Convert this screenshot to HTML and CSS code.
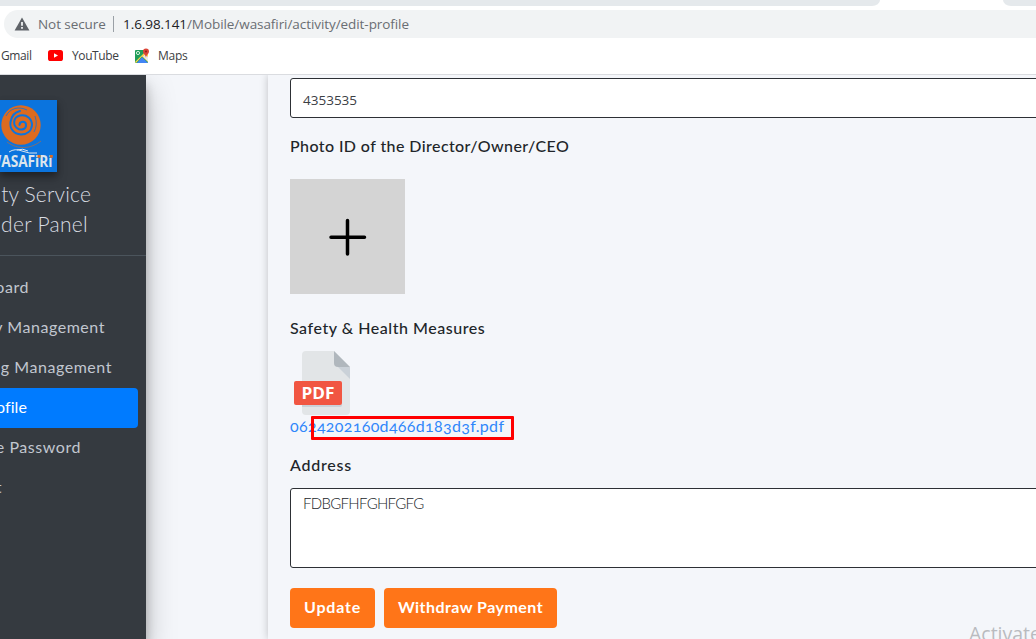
FILE: index.html
```html
<!DOCTYPE html>
<html lang="en">
<head>
<meta charset="utf-8">
<title>Edit Profile</title>
<link rel="stylesheet" href="styles.css">
</head>
<body>
<header class="browser">
  <div class="tabs"><span class="tab tab-left"></span><span class="tab tab-right"></span></div>
  <div class="address-bar">
    <svg class="warn" width="16" height="14" viewBox="0 0 16 14"><path d="M8 0.6 15.4 13.6H.6Z" fill="#5f6368"/><path d="M7.1 5h1.8v3.700H7.100zM7.100 10h1.800v1.700H7.100z" fill="#f1f3f4"/></svg>
    <span class="secure">Not secure</span>
    <span class="divider"></span>
    <span class="url"><b>1.6.98.141</b>/Mobile/wasafiri/activity/edit-profile</span>
  </div>
  <nav class="bookmarks">
    <span class="gmail">Gmail</span>
    <svg class="yt" width="15" height="11" viewBox="0 0 15 11"><rect width="15" height="11" rx="2.6" fill="#f00"/><path d="M6 3.3 10 5.5 6 7.7Z" fill="#fff"/></svg>
    <span class="youtube">YouTube</span>
    <svg class="map" width="16" height="16" viewBox="0 0 16 16"><rect x="1" y="2" width="13" height="13" rx="1" fill="#1f9d58"/><path d="M1 14 12 3l2 2v9L8 8.5 2 15Z" fill="#fbd24b"/><path d="M3 15 8 9l6 6Z" fill="#4285f4"/><path d="M9 8.5 11 6.5 14 9v4.5Z" fill="#e8eaed"/><circle cx="4" cy="5" r="1.6" fill="none" stroke="#d5efdf"/><path d="M12 .5a3 3 0 0 1 3 3c0 2.4-2.6 3-3 6.5-.4-3.500-3-4.100-3-6.500a3 3 0 0 1 3-3Z" fill="#db4437"/><circle cx="12" cy="3.500" r="1" fill="#8c1d16"/></svg>
    <span class="maps">Maps</span>
  </nav>
</header>
<div class="page">
  <aside class="sidebar">
    <div class="brand">
      <svg class="logo" width="57" height="72" viewBox="0 0 57 72">
        <rect width="57" height="72" fill="#0b74de"/>
        <circle cx="21" cy="25" r="19.700" fill="#dc6b20"/>
        <path d="M19.500 25C19.500 21 25.500 20.500 26 24.500C26.500 29 22 30.500 18.500 29C12 26 13 17 20 15.500C27 14 32 19 32 25C31.500 31 27 34.500 21 34.500C14 34 9.500 29 10.500 22C11.500 16 15 12 20 11" fill="none" stroke="#0b74de" stroke-width="2" stroke-linecap="round"/>
        <path d="M6 16C10 8 19 6 27 10M35 16Q38 25 34 32" fill="none" stroke="#0b74de" stroke-width=".8"/>
        <path d="M7 42C18 50 31 49 41 41" fill="none" stroke="#9a6c55" stroke-width=".8"/>
        <path d="M9 52Q15 48 22 51T37 53M17 50Q23 48 28 51" fill="none" stroke="#dce5ed" stroke-width="1"/>
        <text class="logo-text" x="-12" y="66.500" textLength="64.500" lengthAdjust="spacingAndGlyphs">WASAFiRi</text>
        <path d="M37.500 55h3v2.800h-3zM49.800 55h3v2.800h-3z" fill="#dc6b20"/>
      </svg>
      <div class="title t1">ty Service</div>
      <div class="title t2">der Panel</div>
    </div>
    <nav class="menu">
      <a class="item m1">oard</a>
      <a class="item m2">y Management</a>
      <a class="item m3">g Management</a>
      <a class="item active m4">ofile</a>
      <a class="item m5">e Password</a>
      <a class="item m6">t</a>
    </nav>
  </aside>
  <main class="content">
    <div class="input number">4353535</div>
    <div class="label l1">Photo ID of the Director/Owner/CEO</div>
    <div class="upload"><svg width="115" height="115" viewBox="0 0 115 115"><path d="M57.500 41.500V75M41 58.300H74.500" stroke="#000" stroke-width="3.500" stroke-linecap="round"/></svg></div>
    <div class="label l2">Safety &amp; Health Measures</div>
    <svg class="pdf" width="64" height="64" viewBox="0 0 64 64">
      <path d="M16 0H44L60 16V60a4 4 0 0 1-4 4H16a4 4 0 0 1-4-4V4a4 4 0 0 1 4-4Z" fill="#e2e5e7"/>
      <path d="M48 16H60V28Z" fill="#cad1d8"/><path d="M44 0 60 16H48a4 4 0 0 1-4-4Z" fill="#b0b7bd"/>
      <path d="M12 54H50a2 2 0 0 0 2-2v2a2 2 0 0 1-2 2H12Z" fill="#cad1d8"/>
      <rect x="4" y="30" width="48" height="24" rx="2" fill="#f15642"/>
      <text class="pdf-text" x="11.500" y="48" textLength="33" lengthAdjust="spacingAndGlyphs">PDF</text>
    </svg>
    <div class="file"><a>0624202160d466d183d3f.pdf</a><span class="mark"></span></div>
    <div class="label l3">Address</div>
    <div class="input area">FDBGFHFGHFGFG</div>
    <div class="buttons"><button class="update">Update</button><button class="withdraw">Withdraw Payment</button></div>
  </main>
</div>
<div class="watermark">Activate</div>
</body>
</html>
```
FILE: styles.css
```css
* { box-sizing: border-box; }
body { margin: 0; width: 1036px; height: 639px; overflow: hidden; position: relative; background: #f4f6fa; font-family: Lato, sans-serif; color: #212529; }
svg { display: block; flex: none; }
.browser { height: 75px; background: #fff; border-bottom: 1px solid #dadce0; font-family: "Open Sans", "Noto Sans", sans-serif; }
.tabs { height: 10px; display: flex; justify-content: space-between; }
.tab { height: 6px; background: #e5e9ec; }
.tab-left { width: 880px; border-bottom-right-radius: 8px 6px; }
.tab-right { width: 33px; border-bottom-left-radius: 8px 6px; }
.address-bar { height: 28px; margin-left: 4px; padding-left: 10px; display: flex; align-items: center; background: #f1f3f4; border-radius: 14px 0 0 14px; font-size: 13.5px; letter-spacing: -.07px; white-space: nowrap; color: #6a6e73; }
.secure { margin-left: 8px; width: 67px; }
.divider { width: 1px; height: 16px; margin: 0 9px 0 8px; background: #9aa0a6; }
.url b { font-weight: 400; color: #202124; }
.bookmarks { height: 35px; display: flex; align-items: center; font-size: 12px; letter-spacing: -.4px; color: #3c4043; white-space: nowrap; }
.gmail { width: 48px; padding-left: 1px; }
.youtube { margin-left: 9px; width: 62px; }
.maps { margin-left: 8px; letter-spacing: -.25px; }
.page { height: 564px; display: flex; overflow: hidden; background: #f4f6fa; }
.sidebar { width: 146px; background: #353a40; box-shadow: 0 14px 28px rgba(0,0,0,.25), 0 10px 10px rgba(0,0,0,.22); overflow: hidden; z-index: 1; }
.brand { height: 181px; padding-top: 25px; border-bottom: 1px solid #4b545c; }
.logo { box-shadow: 0 6px 10px rgba(0,0,0,.25), 0 3px 6px rgba(0,0,0,.25); margin-bottom: 7px; }
.logo-text { font: 700 15.5px "Open Sans", sans-serif; fill: #dce5ed; }
.title { height: 30px; line-height: 30px; font-size: 21px; font-weight: 300; letter-spacing: .15px; color: #d9dde3; display: flex; justify-content: flex-end; white-space: nowrap; }
.t1 { width: 91px; }
.t2 { width: 88px; letter-spacing: .3px; }
.menu { padding-top: 12px; }
.item { height: 40px; padding-bottom: 4px; display: flex; align-items: center; justify-content: flex-end; font-size: 16px; letter-spacing: .55px; color: #c2c7d0; white-space: nowrap; }
.m1 { width: 29px; }
.m2 { width: 105px; }
.m3 { width: 112px; }
.m4 { width: 138px; padding-right: 111px; letter-spacing: .1px; }
.m5 { width: 81px; }
.m6 { width: 2px; }
.active { background: #007bff; color: #fff; border-radius: 0 4px 4px 0; }
.content { margin-left: 122px; width: 768px; padding: 3px 0 0 22px; box-shadow: 0 0 8px rgba(0,0,0,.22); background: #f4f6fa; }
.input { width: 760px; background: #fff; border: 1px solid #2d3035; border-radius: 3px; padding-left: 12px; }
.number { height: 40px; line-height: 42px; font-family: "Open Sans", sans-serif; font-size: 13.5px; color: #3c4045; }
.label { height: 24px; line-height: 24px; font-size: 16px; font-weight: 500; letter-spacing: .41px; white-space: nowrap; }
.l1 { margin-top: 16px; }
.upload { margin-top: 21px; width: 115px; height: 115px; background: #d4d4d4; }
.l2 { margin-top: 22px; letter-spacing: .53px; }
.pdf { margin-top: 11px; }
.pdf-text { font: 700 15.5px "Open Sans", sans-serif; fill: #fff; }
.file { position: relative; width: 224px; height: 24px; line-height: 22px; font-size: 16px; letter-spacing: .32px; color: #2f86fb; font-variant-numeric: oldstyle-nums; }
.mark { position: absolute; left: 21px; top: 1px; width: 203px; height: 24px; border: 3px solid #f00; border-radius: 1px; }
.l3 { margin-top: 14px; letter-spacing: .75px; }
.area { margin-top: 11px; height: 80px; padding-top: 2px; line-height: 24px; font-size: 15px; letter-spacing: -.7px; font-weight: 300; }
.buttons { margin-top: 20px; display: flex; gap: 9px; }
button { height: 40px; padding: 0 0 3px; border: 0; border-radius: 4px; background: #ff7518; color: #fff; font: 700 16px Lato, sans-serif; letter-spacing: .45px; white-space: nowrap; }
.update { width: 85px; letter-spacing: .8px; }
.withdraw { width: 173px; }
.watermark { position: absolute; left: 969px; top: 620px; font: 19.5px "Open Sans", sans-serif; color: #b9bbbf; }
```
